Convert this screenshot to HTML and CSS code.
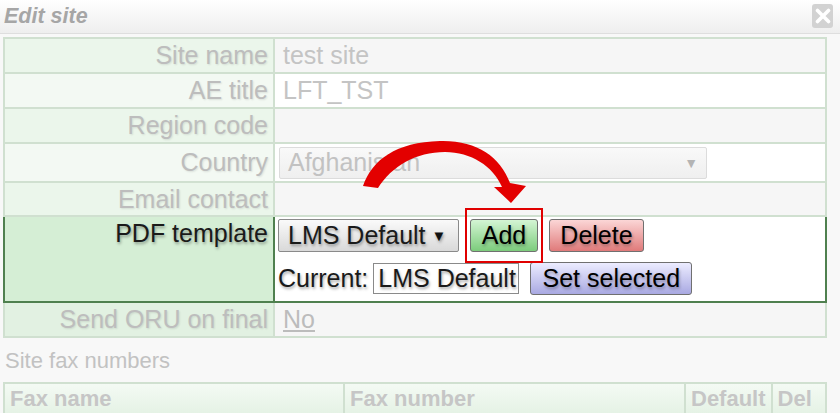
FILE: index.html
```html
<!DOCTYPE html>
<html lang="en">
<head>
  <meta charset="UTF-8">
  <title>Edit site</title>
  <link rel="stylesheet" href="styles.css">
</head>
<body>
  <div class="dialog">
    <div class="titlebar">
      <span class="title">Edit site</span>
      <span class="close">
        <svg width="16" height="16" viewBox="0 0 16 16"><path d="M2.5 2.5 L13.5 13.5 M13.5 2.5 L2.5 13.5" stroke="#fff" stroke-width="3.6" stroke-linecap="round"/></svg>
      </span>
    </div>

    <div class="content">
      <table class="form">
        <tr class="odd"><td class="label">Site name</td><td class="value">test site</td></tr>
        <tr class="even"><td class="label">AE title</td><td class="value">LFT_TST</td></tr>
        <tr class="odd"><td class="label">Region code</td><td class="value"></td></tr>
        <tr class="even country"><td class="label">Country</td><td class="value"><span class="fake-select">Afghanistan<span class="caret">&#9660;</span></span></td></tr>
        <tr class="odd email"><td class="label">Email contact</td><td class="value"></td></tr>
        <tr class="focus">
          <td class="label">PDF template</td>
          <td class="value">
            <div class="line">
              <span class="select">LMS Default <span class="caret">&#9660;</span></span>
              <button class="btn add">Add</button>
              <button class="btn delete">Delete</button>
            </div>
            <div class="line">
              <span class="current">Current:</span>
              <span class="input">LMS Default</span>
              <button class="btn setsel">Set selected</button>
            </div>
          </td>
        </tr>
        <tr class="odd oru"><td class="label">Send ORU on final</td><td class="value"><a href="#">No</a></td></tr>
      </table>

      <div class="section">Site fax numbers</div>

      <table class="fax">
        <tr>
          <th class="c-name">Fax name</th>
          <th class="c-number">Fax number</th>
          <th class="c-default">Default</th>
          <th class="c-del">Del</th>
        </tr>
      </table>
    </div>

    <!-- annotation drawn over the screenshot -->
    <svg class="arrow" width="840" height="413" viewBox="0 0 840 413">
      <path d="M363 186 C372 160, 396 142, 440 141 C476 140, 500 156, 510 183 L526 186 L511 203 L494 187 L502 187 C493 166, 471 152, 445 152 C416 152, 392 166, 378 188 Z" fill="#e30000"/>
    </svg>
    <div class="callout"></div>
  </div>
</body>
</html>
```

FILE: styles.css
```css
body {
  margin: 0;
  font-family: "Liberation Sans", Arial, sans-serif;
  background: #f8f8f8;
}

.dialog {
  position: relative;
  width: 840px;
  height: 413px;
  overflow: hidden;
  background: #f8f8f8;
}

.titlebar {
  height: 33px;
  display: flex;
  align-items: center;
  justify-content: space-between;
  background: linear-gradient(to bottom, #ffffff, #eeeeee);
  border-bottom: 1px solid #dedede;
  padding-left: 4px;
}

.title {
  font-size: 21.5px;
  font-weight: bold;
  font-style: italic;
  color: #a6a6a6;
}

.close {
  width: 21px;
  height: 24px;
  margin-right: 7px;
  margin-top: -2px;
  border-radius: 3px;
  background: #d2d2d2;
  display: flex;
  align-items: center;
  justify-content: center;
}

.content {
  padding: 3px 13px 0 3px;
}

table {
  border-collapse: collapse;
  width: 824px;
}

.form td {
  border: 2px solid #d0e0d0;
  padding: 0;
  font-size: 25px;
  height: 33px;
}

.form .label {
  width: 263px;
  text-align: right;
  padding-right: 5px;
  color: #bdbdbd;
  text-shadow: 1px 1px 2px rgba(0, 0, 0, 0.1);
}

.form .value {
  padding-left: 8px;
  color: #c4c4c4;
}

.odd .label { background: #ebf6eb; }
.odd .value { background: #f6f6f6; }
.even .label { background: #f3f9f3; }
.even .value { background: #ffffff; }

.form .country td { height: 37px; }
.form .email td { height: 32px; }

.fake-select {
  display: flex;
  align-items: center;
  justify-content: space-between;
  width: 410px;
  height: 30px;
  margin-left: -4px;
  padding: 0 8px;
  border: 1px solid #dcdcdc;
  border-radius: 2px;
  background: linear-gradient(to bottom, #f9f9f9, #efefef);
  color: #c2c2c2;
}

.fake-select .caret {
  font-size: 14px;
  color: #b4b4b4;
}

.form .focus td {
  border: 2px solid #4f804f;
  vertical-align: top;
  height: 82px;
  color: #1a1a1a;
  text-shadow: 1px 2px 3px rgba(0, 0, 0, 0.35);
}

.focus .label {
  background: #d5eed5;
  padding-top: 2px;
}

.focus .value {
  background: #ffffff;
  padding: 1px 0 0 3px;
}

.line {
  display: flex;
  align-items: center;
  gap: 11px;
  margin-top: 1px;
}

.line + .line {
  margin-top: 10px;
}

.select {
  width: 170px;
  height: 31px;
  padding-left: 9px;
  display: flex;
  align-items: center;
  gap: 6px;
  border: 1px solid #8a8a8a;
  border-radius: 2px;
  background: linear-gradient(to bottom, #fafafa, #d9d9d9);
}

.select .caret {
  font-size: 15px;
  color: #111;
}

.btn {
  font-family: inherit;
  font-size: 25px;
  color: #000;
  height: 33px;
  padding: 0 6px;
  border: 1px solid #707070;
  border-radius: 3px;
  text-shadow: 1px 2px 3px rgba(0, 0, 0, 0.3);
}

.add {
  width: 68px;
  background: linear-gradient(to bottom, #d4f5d4, #7ccc7c);
}

.delete {
  width: 95px;
  background: linear-gradient(to bottom, #fbd6d6, #e07a7a);
}

.setsel {
  width: 162px;
  background: linear-gradient(to bottom, #ececff, #a9a9e2);
}

.current {
  margin-right: -6px;
}

.input {
  width: 140px;
  height: 29px;
  padding-left: 4px;
  border: 1px solid #8a8a8a;
  display: flex;
  align-items: center;
  white-space: nowrap;
  overflow: hidden;
}

.oru .label { background: #e2f1e2; }

.oru a {
  color: #bcbcbc;
  text-decoration: underline;
}

.section {
  font-size: 22px;
  color: #c2c2c2;
  padding: 10px 0 0 2px;
  height: 34px;
}

.fax th {
  border: 2px solid #d0e0d0;
  background: linear-gradient(to bottom, #f4faf4, #e5f2e5);
  color: #c6c6c6;
  font-size: 22px;
  text-align: left;
  padding: 2px 5px;
  height: 26px;
}

.c-name { width: 328px; }
.c-number { width: 329px; }
.c-default { width: 72px; }

.arrow {
  position: absolute;
  left: 0;
  top: 0;
  pointer-events: none;
}

.callout {
  position: absolute;
  left: 465px;
  top: 208px;
  width: 74px;
  height: 51px;
  border: 2px solid #e00000;
}
```
